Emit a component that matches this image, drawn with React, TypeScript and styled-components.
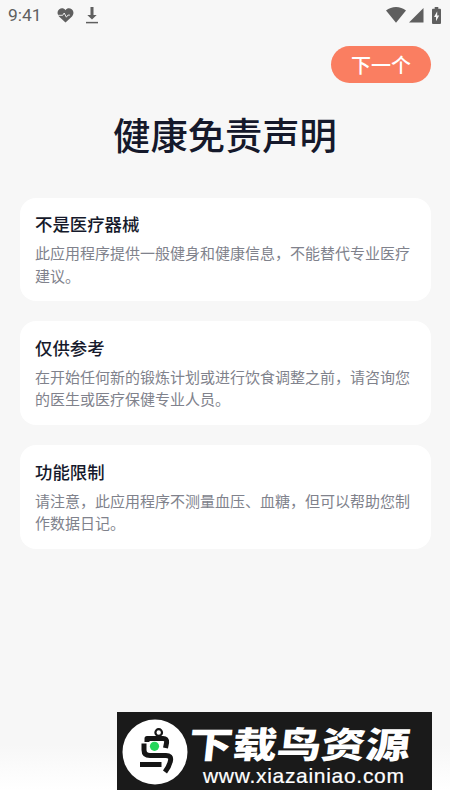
import styled, {createGlobalStyle} from "styled-components";

const notices = [
  {
    title: '不是医疗器械',
    text: '此应用程序提供一般健身和健康信息，不能替代专业医疗建议。',
  },
  {
    title: '仅供参考',
    text: '在开始任何新的锻炼计划或进行饮食调整之前，请咨询您的医生或医疗保健专业人员。',
  },
  {
    title: '功能限制',
    text: '请注意，此应用程序不测量血压、血糖，但可以帮助您制作数据日记。',
  },
];

const StatusIcons = () => (
  <StatusGroup $gap={12}>
    <Time>9:41</Time>
    <svg width='17' height='15' viewBox='0 0 17 15'>
      <path d='M8.5 14.6 2 8.4C-.2 6 .3 2.6 2.3 1.2 4.4-.2 7 .2 8.5 2.2 10-.2 12.7-.2 14.7 1.2 16.7 2.6 17.2 6 15 8.4Z' fill='#5f5f5f'/>
      <path d='M0 7.3h5.7l1.5-2.3 2.2 4.2 1.5-2.1h2' fill='none' stroke='#f7f7f7' strokeWidth='.9'/>
    </svg>
    <svg width='12' height='17' viewBox='0 0 12 17'>
      <path d='M4.5 0h3v8h3.2L6 12.5 1.3 8h3.2Z' fill='#5f5f5f'/>
      <path d='M0 15.6h12' stroke='#5f5f5f' strokeWidth='1.5'/>
    </svg>
  </StatusGroup>
);

const SystemIcons = () => (
  <StatusGroup $gap={3}>
    <svg width='20' height='16' viewBox='0 0 20 16'>
      <path d='M0 3.6C5.6-1.2 14.4-1.2 20 3.6L10 15.8Z' fill='#5f5f5f'/>
    </svg>
    <svg width='15' height='15' viewBox='0 0 15 15'>
      <path d='M14.5 0v14.5H0Z' fill='#5f5f5f'/>
    </svg>
    <Battery width='9' height='17' viewBox='0 0 9 17'>
      <path d='M2.7 0h3.6v1.7H8q1 0 1 1V16q0 1-1 1H1q-1 0-1-1V2.7q0-1 1-1h1.7Z' fill='#5f5f5f'/>
      <path d='M5.2 4.2 2 10h2v4.3L7.2 8.5h-2Z' fill='#f7f7f7'/>
    </Battery>
  </StatusGroup>
);

const BirdLogo = () => (
  <svg width='66' height='66' viewBox='0 0 66 66'>
    <circle cx='33' cy='33' r='32.5' fill='#fff'/>
    <circle cx='36.7' cy='13.5' r='3.3' fill='none' stroke='#151515' strokeWidth='2.2'/>
    <g fill='none' stroke='#151515' strokeWidth='5' strokeLinejoin='round'>
      <path d='M25 23V19.5H41Q45 19.500 44.600 23.500L43.500 29'/>
      <path d='M22 24.500V31Q22 36.500 28 36.500H44Q49.500 36.500 48.500 41.500Q47.500 47 43 53'/>
      <path d='M18 45.500H39.500'/>
    </g>
    <circle cx='32.500' cy='27.300' r='4.600' fill='#25d65b'/>
  </svg>
);

const App = () => {
  return (
    <>
      <GlobalStyle/>
      <Screen>
        <StatusBar>
          <StatusIcons/>
          <SystemIcons/>
        </StatusBar>
        <Actions>
          <NextButton>下一个</NextButton>
        </Actions>
        <Heading>健康免责声明</Heading>
        <Notices>
          {notices.map(({title, text}) => (
            <Card key={title}>
              <CardTitle>{title}</CardTitle>
              <CardText>{text}</CardText>
            </Card>
          ))}
        </Notices>
        <Watermark>
          <BirdLogo/>
          <Brand>
            <BrandName>下载鸟资源</BrandName>
            <BrandUrl>www.xiazainiao.com</BrandUrl>
          </Brand>
        </Watermark>
      </Screen>
    </>
  );
};

const GlobalStyle = createGlobalStyle`
  * {
    box-sizing: border-box;
  }

  body {
    margin: 0;
    background: #fff;
    font-family: "Noto Sans CJK SC", sans-serif;
  }

  svg {
    display: block;
    flex-shrink: 0;
  }
`

const Screen = styled.main`
  position: relative;
  display: flex;
  flex-direction: column;
  width: 450px;
  height: 800px;
  overflow: hidden;
  background: linear-gradient(#f7f7f7 0, #f7f7f7 745px, #fff 790px);
`

const StatusBar = styled.header`
  display: flex;
  justify-content: space-between;
  align-items: center;
  height: 30px;
  padding: 0 9px 0 8px;
`

const StatusGroup = styled.div<{$gap: number}>`
  display: flex;
  align-items: center;
  gap: ${({$gap}) => $gap}px;
`

const Time = styled.span`
  width: 37px;
  color: #5f5f5f;
  font: 17.4px/20px Roboto, sans-serif;
`

const Battery = styled.svg`
  margin-left: 5px;
`

const Actions = styled.div`
  display: flex;
  justify-content: flex-end;
  padding: 16px 19px 0 0;
`

const NextButton = styled.button`
  width: 100px;
  height: 37px;
  padding: 0;
  border: 0;
  border-radius: 19px;
  background: #fa7e61;
  color: #fff;
  font: 500 20px/37px "Noto Sans CJK SC", sans-serif;
`

const Heading = styled.h1`
  margin: 23px 0 0;
  color: #15192b;
  font-size: 37.3px;
  font-weight: 500;
  line-height: 56px;
  text-align: center;
`

const Notices = styled.section`
  display: flex;
  flex-direction: column;
  gap: 20px;
  padding: 35.5px 19.5px 0;
`

const Card = styled.article`
  height: 103.8px;
  padding: 13.5px 15.5px;
  border-radius: 16px;
  background: #fff;
`

const CardTitle = styled.h2`
  margin: 0;
  color: #15192b;
  font-size: 17.4px;
  font-weight: 500;
  line-height: 26px;
`

const CardText = styled.p`
  margin: 5px 0 0;
  color: #80828c;
  font-size: 15px;
  line-height: 22.5px;
`

const Watermark = styled.aside`
  position: absolute;
  left: 117px;
  top: 712px;
  display: flex;
  align-items: center;
  gap: 1px;
  width: 315px;
  height: 78px;
  padding: 2px 0 0 5px;
  background: #1a1a1a;
  color: #fff;
`

const Brand = styled.div`
  display: flex;
  flex-direction: column;
  padding-top: 5px;
  white-space: nowrap;
`

const BrandName = styled.strong`
  font-size: 36px;
  font-weight: 900;
  line-height: 40px;
  transform: scaleX(1.23) skewX(-5deg);
  transform-origin: left center;
`

const BrandUrl = styled.span`
  margin: 1px 0 0 14px;
  font: 21px/25px "Liberation Sans", Arial, sans-serif;
  letter-spacing: 0.7px;
  -webkit-text-stroke: 0.2px #fff;
`

export default App;
